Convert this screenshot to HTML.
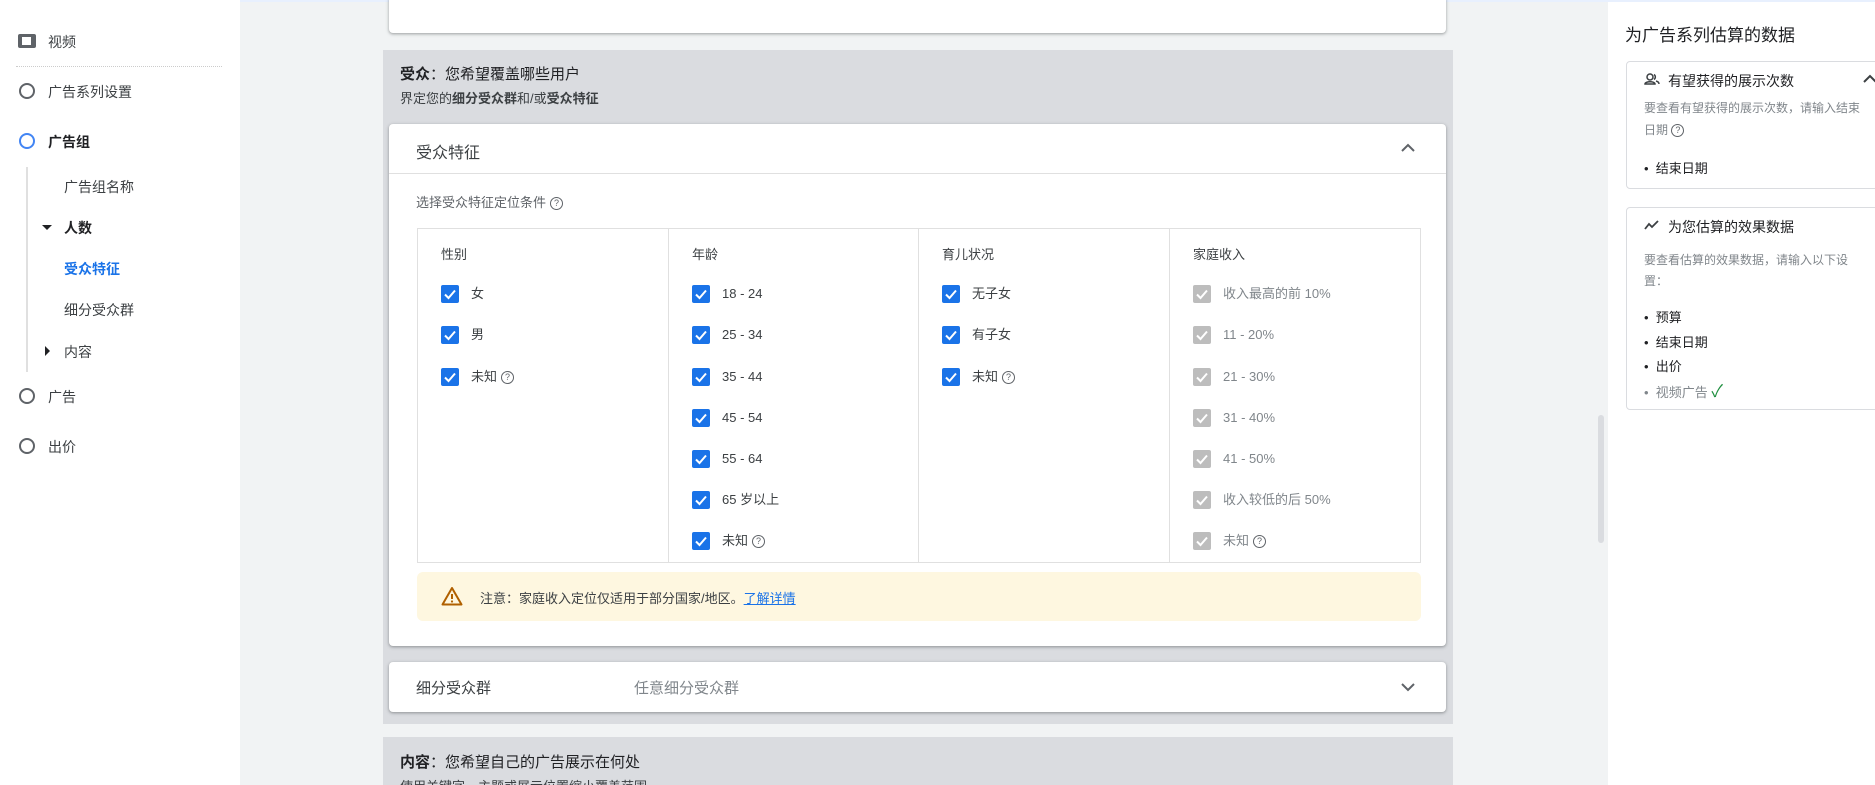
<!DOCTYPE html><html style="overflow:hidden;height:785px"><head><meta charset="utf-8"><style>
*{margin:0;padding:0;box-sizing:border-box}
body{width:1875px;height:785px;overflow:hidden;background:#f1f3f4;font-family:"Liberation Sans","Noto Sans CJK SC",sans-serif;color:#3c4043;position:relative;font-size:14px}
.a{position:absolute;white-space:nowrap}
.side{position:absolute;left:0;top:0;width:240px;height:785px;background:#fff}
.circ{position:absolute;left:19px;width:16px;height:16px;border:2px solid #5f6368;border-radius:50%}
.card{position:absolute;background:#fff;border-radius:4px;box-shadow:0 1px 2px rgba(60,64,67,.3),0 1px 3px 1px rgba(60,64,67,.15)}
.cb{position:absolute;width:18px;height:18px;border-radius:2px;background:#1a73e8}
.cb.g{background:#bdbdbd}
.cb svg{position:absolute;left:0;top:0}
.q{display:inline-block;width:13px;height:13px;border:1.3px solid #5f6368;border-radius:50%;font-size:9px;line-height:11px;text-align:center;vertical-align:middle;margin-left:4px;color:#5f6368}
.rc{position:absolute;left:1626px;width:260px;border:1px solid #dadce0;border-radius:4px;background:#fff}
</style></head><body>
<div class="a" style="left:0;top:0;width:1875px;height:2px;background:#e8f0fe"></div>
<div class="side">
<div class="a" style="left:18px;top:34px;width:18px;height:14px;border-radius:2px;background:#5f6368"></div>
<div class="a" style="left:22px;top:37px;width:9px;height:8px;background:#fff"></div>
<div class="a" style="left:48px;top:32px;font-size:14px">视频</div>
<div class="a" style="left:16px;top:66px;width:206px;border-top:1px dotted #ccc"></div>
<div class="circ" style="top:83px"></div><div class="a" style="left:48px;top:82px">广告系列设置</div>
<div class="circ" style="top:133px;border-color:#4285f4"></div><div class="a" style="left:48px;top:132px;font-weight:bold;color:#202124">广告组</div>
<div class="a" style="left:26px;top:167px;width:2px;height:205px;background:#e0e0e0"></div>
<div class="a" style="left:64px;top:177px">广告组名称</div>
<div class="a" style="left:42px;top:225px;border-left:5px solid transparent;border-right:5px solid transparent;border-top:5px solid #202124"></div>
<div class="a" style="left:64px;top:218px;font-weight:bold;color:#202124">人数</div>
<div class="a" style="left:64px;top:259px;font-weight:bold;color:#1a73e8">受众特征</div>
<div class="a" style="left:64px;top:300px">细分受众群</div>
<div class="a" style="left:45px;top:346px;border-top:5px solid transparent;border-bottom:5px solid transparent;border-left:5px solid #202124"></div>
<div class="a" style="left:64px;top:342px">内容</div>
<div class="circ" style="top:388px"></div><div class="a" style="left:48px;top:387px">广告</div>
<div class="circ" style="top:438px"></div><div class="a" style="left:48px;top:437px">出价</div>
</div>
<div class="card" style="left:389px;top:-4px;width:1057px;height:37px"></div>
<div class="a" style="left:383px;top:50px;width:1070px;height:674px;background:#dadce0"></div>
<div class="a" style="left:400px;top:63px;font-size:15px;color:#202124"><b>受众</b>：您希望覆盖哪些用户</div>
<div class="a" style="left:400px;top:88px;font-size:13px">界定您的<b>细分受众群</b>和/或<b>受众特征</b></div>
<div class="card" style="left:389px;top:124px;width:1057px;height:522px">
<div class="a" style="left:27px;top:15px;font-size:16px">受众特征</div>
<svg class="a" style="left:1011px;top:19px" width="16" height="10"><path d="M2 8 L8 2 L14 8" fill="none" stroke="#5f6368" stroke-width="2"/></svg>
<div class="a" style="left:0;top:49px;width:1057px;height:1px;background:#e0e0e0"></div>
<div class="a" style="left:27px;top:68px;font-size:13px;color:#5f6368">选择受众特征定位条件<span class="q">?</span></div>
<div class="a" style="left:28px;top:104px;width:1004px;height:335px;border:1px solid #e0e0e0"></div>
<div class="a" style="left:279px;top:104px;width:1px;height:335px;background:#e0e0e0"></div>
<div class="a" style="left:529px;top:104px;width:1px;height:335px;background:#e0e0e0"></div>
<div class="a" style="left:780px;top:104px;width:1px;height:335px;background:#e0e0e0"></div>
<div class="a" style="left:28px;top:448px;width:1004px;height:49px;border-radius:6px;background:#fef7e0"></div>
<svg class="a" style="left:52px;top:462px" width="22" height="20"><path d="M11 2 L20.5 18.5 H1.5 Z" fill="none" stroke="#b06000" stroke-width="2" stroke-linejoin="round"/><path d="M11 8v5" stroke="#b06000" stroke-width="2"/><circle cx="11" cy="15.5" r="1.1" fill="#b06000"/></svg>
<div class="a" style="left:91px;top:464px;font-size:13px">注意：家庭收入定位仅适用于部分国家/地区。<span style="color:#1a73e8;text-decoration:underline">了解详情</span></div>
</div>
<div class="card" style="left:389px;top:662px;width:1057px;height:50px">
<div class="a" style="left:27px;top:15px;font-size:15px">细分受众群</div>
<div class="a" style="left:245px;top:15px;font-size:15px;color:#80868b">任意细分受众群</div>
<svg class="a" style="left:1011px;top:20px" width="16" height="10"><path d="M2 2 L8 8 L14 2" fill="none" stroke="#5f6368" stroke-width="2"/></svg>
</div>
<div class="a" style="left:383px;top:737px;width:1070px;height:48px;background:#dadce0;overflow:hidden">
<div class="a" style="left:17px;top:14px;font-size:15px;color:#202124"><b>内容</b>：您希望自己的广告展示在何处</div>
<div class="a" style="left:17px;top:39px;font-size:13px">使用关键字、主题或展示位置缩小覆盖范围</div>
</div>
<div class="a" style="left:1598px;top:415px;width:6px;height:128px;border-radius:3px;background:#dadce0"></div>
<div class="a" style="left:1608px;top:2px;width:267px;height:783px;background:#fff"></div>
<div class="a" style="left:1625px;top:21px;font-size:17px;color:#202124">为广告系列估算的数据</div>
<div class="rc" style="top:61px;height:128px">
<svg class="a" style="left:17px;top:10px" width="16" height="14"><circle cx="6" cy="5" r="3" fill="none" stroke="#3c4043" stroke-width="1.5"/><path d="M1 12c0-3 10-3 10 0zM10 2.5a3 3 0 0 1 0 5M12 9c2 .5 3 1.5 3 3" fill="none" stroke="#3c4043" stroke-width="1.5"/></svg>
<div class="a" style="left:41px;top:9px;font-size:14px;color:#202124">有望获得的展示次数</div>
<svg class="a" style="left:235px;top:12px" width="16" height="10"><path d="M2 8 L8 2 L14 8" fill="none" stroke="#3c4043" stroke-width="2"/></svg>
<div class="a" style="left:17px;top:35px;font-size:12px;color:#80868b;line-height:22px;white-space:normal;width:220px">要查看有望获得的展示次数，请输入结束日期 <span class="q" style="margin:0">?</span></div>
<div class="a" style="left:17px;top:96px;font-size:13px;color:#202124">•&nbsp; 结束日期</div>
</div>
<div class="rc" style="top:207px;height:203px">
<svg class="a" style="left:17px;top:12px" width="16" height="10"><path d="M1 9 L5 4 L8 7 L14 1" fill="none" stroke="#3c4043" stroke-width="1.8"/></svg>
<div class="a" style="left:41px;top:9px;font-size:14px;color:#202124">为您估算的效果数据</div>
<div class="a" style="left:17px;top:42px;font-size:12px;color:#80868b;line-height:21px;white-space:normal;width:225px">要查看估算的效果数据，请输入以下设置：</div>
<div class="a" style="left:17px;top:98px;font-size:13px;color:#202124;line-height:24.5px">•&nbsp; 预算<br>•&nbsp; 结束日期<br>•&nbsp; 出价<br><span style="color:#80868b">•&nbsp; 视频广告 <span style="color:#1e8e3e;font-size:17px">✓</span></span></div>
</div>
<div id="grid"></div>
<script>
var cols=[[441,"性别",["女","男","未知?"]],[692,"年龄",["18 - 24","25 - 34","35 - 44","45 - 54","55 - 64","65 岁以上","未知?"]],[942,"育儿状况",["无子女","有子女","未知?"]],[1193,"家庭收入",["收入最高的前 10%","11 - 20%","21 - 30%","31 - 40%","41 - 50%","收入较低的后 50%","未知?"],1]];
var rows=[294,335,377,418,459,500,541],h="";
cols.forEach(function(c){h+='<div class="a" style="left:'+c[0]+'px;top:244px;font-size:13px">'+c[1]+'</div>';
c[2].forEach(function(t,i){var y=rows[i];var q=t.slice(-1)=="?";if(q)t=t.slice(0,-1);
h+='<div class="cb'+(c[3]?' g':'')+'" style="left:'+c[0]+'px;top:'+(y-9)+'px"><svg width="18" height="18"><path d="M4 9.5 L7.5 13 L14 5.5" fill="none" stroke="#fff" stroke-width="2"/></svg></div>';
h+='<div class="a" style="left:'+(c[0]+30)+'px;top:'+(y-9)+'px;font-size:13px;line-height:18px;color:'+(c[3]?'#80868b':'#3c4043')+'">'+t+(q?'<span class="q">?</span>':'')+'</div>';});});
document.getElementById("grid").innerHTML=h;
</script>
</body></html>
